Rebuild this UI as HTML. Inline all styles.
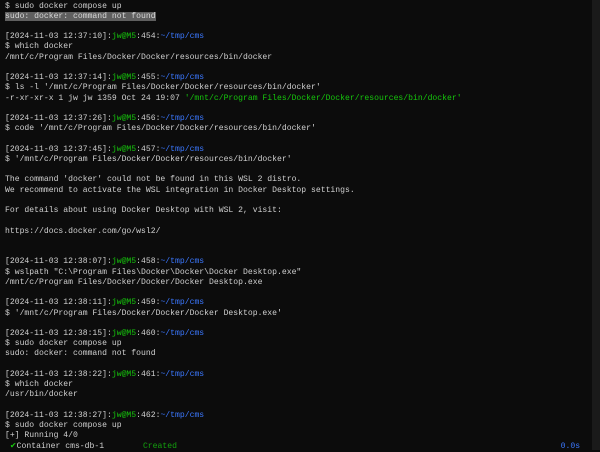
<!DOCTYPE html>
<html><head><meta charset="utf-8"><style>
html,body{margin:0;padding:0;background:#0c0c0c;width:600px;height:450px;overflow:hidden}
.t{position:absolute;left:5px;top:1.5px;font-family:"Liberation Mono",monospace;font-size:8.1px;line-height:10.24px;color:#d0d0d0;white-space:pre}
.g{color:#16c60c}.gd{color:#13a10e}.b{color:#3b78ff}
.hl{background:#5f5f5f;color:#d8d8d8}
.sb{position:absolute;right:0;top:0;width:8px;height:450px;background:#1a1a1a}
</style></head><body>
<div class="t">$ sudo docker compose up
<span class="hl">sudo: docker: command not found</span>

[2024-11-03 12:37:10]:<span class="g">jw@M5</span>:454:<span class="b">~/tmp/cms</span>
$ which docker
/mnt/c/Program Files/Docker/Docker/resources/bin/docker

[2024-11-03 12:37:14]:<span class="g">jw@M5</span>:455:<span class="b">~/tmp/cms</span>
$ ls -l '/mnt/c/Program Files/Docker/Docker/resources/bin/docker'
-r-xr-xr-x 1 jw jw 1359 Oct 24 19:07 <span class="g">'/mnt/c/Program Files/Docker/Docker/resources/bin/docker'</span>

[2024-11-03 12:37:26]:<span class="g">jw@M5</span>:456:<span class="b">~/tmp/cms</span>
$ code '/mnt/c/Program Files/Docker/Docker/resources/bin/docker'

[2024-11-03 12:37:45]:<span class="g">jw@M5</span>:457:<span class="b">~/tmp/cms</span>
$ '/mnt/c/Program Files/Docker/Docker/resources/bin/docker'

The command 'docker' could not be found in this WSL 2 distro.
We recommend to activate the WSL integration in Docker Desktop settings.

For details about using Docker Desktop with WSL 2, visit:

https://docs.docker.com/go/wsl2/


[2024-11-03 12:38:07]:<span class="g">jw@M5</span>:458:<span class="b">~/tmp/cms</span>
$ wslpath "C:\Program Files\Docker\Docker\Docker Desktop.exe"
/mnt/c/Program Files/Docker/Docker/Docker Desktop.exe

[2024-11-03 12:38:11]:<span class="g">jw@M5</span>:459:<span class="b">~/tmp/cms</span>
$ '/mnt/c/Program Files/Docker/Docker/Docker Desktop.exe'

[2024-11-03 12:38:15]:<span class="g">jw@M5</span>:460:<span class="b">~/tmp/cms</span>
$ sudo docker compose up
sudo: docker: command not found

[2024-11-03 12:38:22]:<span class="g">jw@M5</span>:461:<span class="b">~/tmp/cms</span>
$ which docker
/usr/bin/docker

[2024-11-03 12:38:27]:<span class="g">jw@M5</span>:462:<span class="b">~/tmp/cms</span>
$ sudo docker compose up
[+] Running 4/0
 <span class="g">✔</span>Container cms-db-1        <span class="gd">Created</span>                                                                               <span class="b">0.0s</span></div>
<div class="sb"></div>
</body></html>
